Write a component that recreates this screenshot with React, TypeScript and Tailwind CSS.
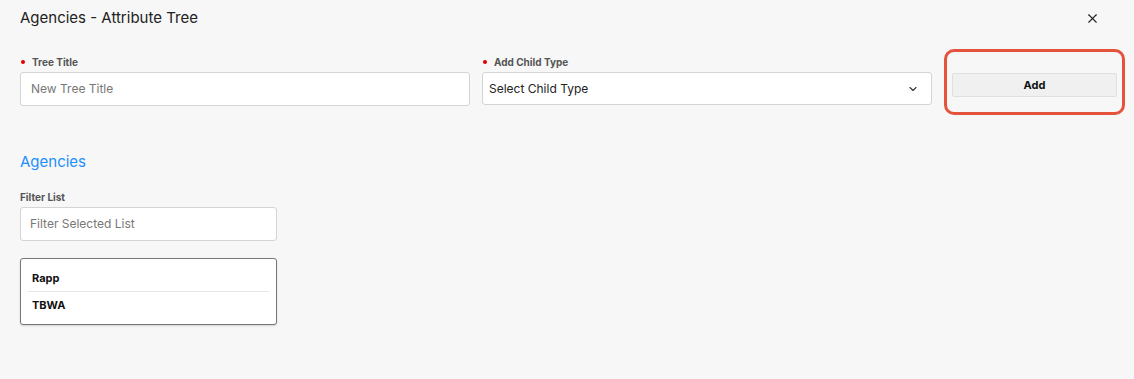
import { ChevronDown, X } from "lucide-react";

function Label({ text, required }: { text: string; required?: boolean }) {
  return (
    <div className="flex items-center h-[14px] mb-[3px] text-[10px] font-bold text-[#555]">
      {required && <span className="w-[4px] h-[4px] rounded-full bg-[#e00000] ml-[1px] mr-[7px]" />}
      <span>{text}</span>
    </div>
  );
}

export default function App() {
  return (
    <div className="w-[1134px] h-[379px] bg-[#f7f7f7] text-[#222] pl-[20px] pr-[10px] pt-[8px]" style={{ fontFamily: "Inter, 'Noto Sans', sans-serif" }}>
      {/* Header */}
      <div className="flex items-center justify-between h-[20px]">
        <h1 className="text-[15px] font-normal text-[#222]">Agencies - Attribute Tree</h1>
        <X className="w-[15px] h-[15px] mr-[24px] text-[#222]" strokeWidth={1.8} />
      </div>

      {/* Form row */}
      <div className="flex items-start mt-[27px]">
        <div className="w-[450px] shrink-0">
          <Label text="Tree Title" required />
          <div className="h-[34px] bg-white border border-[#d4d4d4] rounded-[3px] flex items-center px-[10px] text-[12px] text-[#777]">
            New Tree Title
          </div>
        </div>
        <div className="w-[450px] shrink-0 ml-[12px]">
          <Label text="Add Child Type" required />
          <div className="h-[33px] bg-white border border-[#d4d4d4] rounded-[3px] flex items-center justify-between pl-[6px] pr-[12px] text-[12px] text-[#222]">
            <span>Select Child Type</span>
            <ChevronDown className="w-[12px] h-[12px] text-[#333]" strokeWidth={2.2} />
          </div>
        </div>
        <div className="shrink-0 ml-[12px] -mt-[6px] w-[181px] h-[66px] border-[3px] border-[#e5533d] rounded-[10px] px-[5px] pt-[19px]">
          <button className="w-full h-[24px] bg-[#f0f0f0] border border-[#e0e0e0] rounded-[2px] text-[11px] font-bold text-[#111]">
            Add
          </button>
        </div>
      </div>

      {/* Agencies section */}
      <h2 className="mt-[37px] text-[15px] text-[#1e8fff] leading-[20px]">Agencies</h2>
      <div className="mt-[18px] w-[257px]">
        <div className="text-[10px] font-bold text-[#555] h-[14px] mb-[3px]">Filter List</div>
        <div className="h-[34px] bg-white border border-[#d4d4d4] rounded-[3px] flex items-center px-[9px] text-[12px] text-[#777]">
          Filter Selected List
        </div>
        <div className="mt-[17px] h-[67px] bg-white border border-[#777] rounded-[3px] shadow-[0_1px_2px_rgba(0,0,0,0.15)] px-[7px] pt-[6px]">
          <div className="h-[27px] flex items-center px-[4px] text-[11px] font-bold text-[#111] border-b border-[#e6e6e6]">Rapp</div>
          <div className="h-[27px] flex items-center px-[4px] text-[11px] font-bold text-[#111]">TBWA</div>
        </div>
      </div>
    </div>
  );
}
